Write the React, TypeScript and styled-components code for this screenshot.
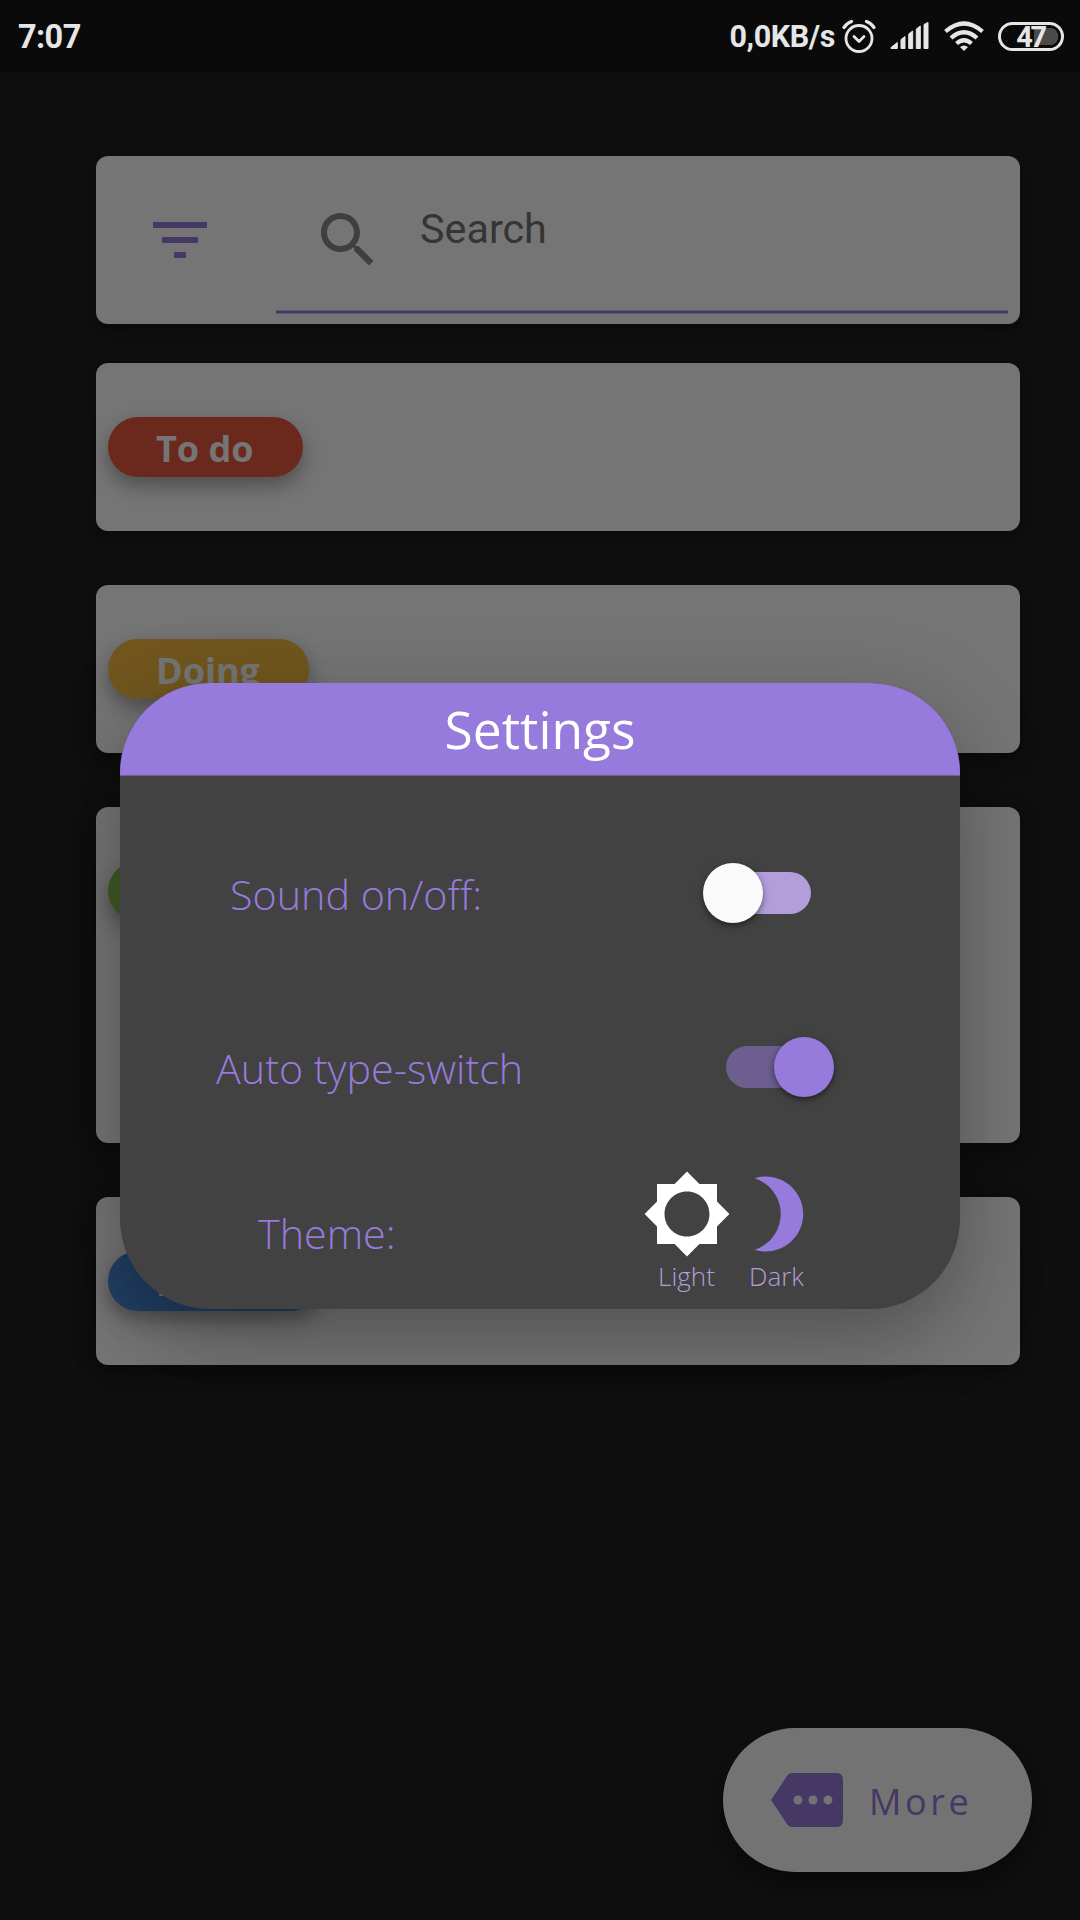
import React, { useState } from "react";
import styled, { createGlobalStyle } from "styled-components";

const GlobalStyle = createGlobalStyle`
  * { box-sizing: border-box; }
  body { margin: 0; background: #212121; font-family: "Open Sans", "Noto Sans", sans-serif; }
`;

const Screen = styled.div`
  position: relative;
  width: 1080px;
  height: 1920px;
  overflow: hidden;
  display: flex;
  flex-direction: column;
  background: #212121;
`;

const StatusBar = styled.header`
  position: relative;
  z-index: 3;
  flex: none;
  height: 72px;
  padding: 0 16px 0 18px;
  display: flex;
  align-items: center;
  background: #0a0a0a;
  color: #e6e6e6;
  font-family: Roboto, sans-serif;
`;

const Clock = styled.span`
  padding-top: 2px;
  font-size: 32.500px;
  font-weight: 700;
  line-height: 40px;
  letter-spacing: -0.6px;
  margin-right: auto;
`;

const NetSpeed = styled.span`
  padding-top: 1px;
  font-size: 30.500px;
  font-weight: 700;
  line-height: 40px;
  letter-spacing: -0.4px;
  margin-right: 7px;
`;

const StatusIcon = styled.svg<{ $gap: number }>`
  display: block;
  flex: none;
  margin-right: ${(p) => p.$gap}px;
`;

const Battery = styled.span`
  width: 66px;
  height: 29px;
  border: 3px solid #e6e6e6;
  border-radius: 15px;
  padding: 4px 4px 2px 3px;
  display: flex;
  align-items: center;
  justify-content: center;
  font-size: 29px;
  font-weight: 700;
  letter-spacing: -2.4px;
  line-height: 24px;
  background: linear-gradient(#4a4a4a, #4a4a4a) right 12px center / 15px 17px no-repeat,
    radial-gradient(circle at 50% 50%, #4a4a4a 8.500px, transparent 9px) right 3px center / 17px 17px no-repeat;
`;

const Board = styled.main`
  padding: 84px 60px 0 96px;
  display: flex;
  flex-direction: column;
  gap: 54px;
`;

const Card = styled.section<{ $height?: number }>`
  height: ${(p) => p.$height ?? 168}px;
  padding: 0 12px;
  border-radius: 12px;
  background: #fff;
  display: flex;
  box-shadow: 0 6px 12px rgba(0, 0, 0, 0.2), 0 6px 24px rgba(0, 0, 0, 0.16);
`;

const SearchCard = styled(Card)`
  margin-bottom: -15px;
  color: #967adc;
`;

const FilterButton = styled.button`
  width: 168px;
  height: 168px;
  padding: 0 0 0 36px;
  border: 0;
  background: none;
  color: inherit;
`;

const SearchField = styled.label`
  flex: 1;
  height: 158px;
  padding-left: 36px;
  display: flex;
  align-items: center;
  border-bottom: 1px solid rgba(150, 122, 220, 0.5);
  box-shadow: inset 0 -2px #967adc, inset 0 -3px rgba(150, 122, 220, 0.5);
`;

const SearchIcon = styled.svg`
  display: block;
  margin-top: 11px;
  color: #8a8a8a;
`;

const SearchHint = styled.span`
  margin: -11px 0 0 36px;
  font: 400 41.300px/50px Roboto, sans-serif;
  color: #737373;
`;

const Chip = styled.span<{ $color: string }>`
  height: 60px;
  margin-top: 54px;
  padding: 1px 49px 0 48px;
  border-radius: 30px;
  background: ${(p) => p.$color};
  color: #fff;
  font-size: 36px;
  font-weight: 700;
  line-height: 62px;
  white-space: nowrap;
  box-shadow: 0 9px 15px rgba(0, 0, 0, 0.2), 0 9px 30px rgba(0, 0, 0, 0.16);
`;

const MoreButton = styled.button`
  position: absolute;
  right: 48px;
  bottom: 48px;
  width: 309px;
  height: 144px;
  padding: 0 0 0 48px;
  border: 0;
  border-radius: 72px;
  background: #fafafa;
  color: #967adc;
  display: flex;
  align-items: center;
  gap: 25px;
  box-shadow: 0 9px 15px rgba(0, 0, 0, 0.2), 0 15px 36px rgba(0, 0, 0, 0.25);
`;

const MoreLabel = styled.span`
  padding: 3px 0 0 1px;
  font: 400 36px/50px "Open Sans", sans-serif;
  letter-spacing: 3.6px;
`;

const Scrim = styled.div`
  position: absolute;
  inset: 0;
  z-index: 2;
  padding: 683px 120px 0;
  background: rgba(0, 0, 0, 0.54);
`;

const Dialog = styled.div`
  height: 626px;
  border-radius: 90px;
  overflow: hidden;
  background: #424242;
  box-shadow: 0 24px 90px 6px rgba(0, 0, 0, 0.2), 0 36px 60px -12px rgba(0, 0, 0, 0.12);
`;

const DialogTitle = styled.h1`
  height: 93px;
  margin: 0;
  background: #967adc;
  border-bottom: 1px solid #6c5e8f;
  color: #fff;
  font-size: 51.500px;
  font-weight: 400;
  line-height: 93px;
  text-align: center;
`;

const SettingRow = styled.div<{ $before: number; $left: number; $height: number }>`
  height: ${(p) => p.$height}px;
  margin-top: ${(p) => p.$before}px;
  padding-left: ${(p) => p.$left}px;
  display: flex;
  align-items: center;
`;

const SettingLabel = styled.span<{ $width: number; $drop?: number }>`
  width: ${(p) => p.$width}px;
  padding-top: ${(p) => p.$drop ?? 0}px;
  color: #967adc;
  font-size: 41.250px;
  font-weight: 300;
  line-height: 57px;
  white-space: nowrap;
`;

const Track = styled.button<{ $on: boolean }>`
  width: 99px;
  height: 42px;
  padding: 0;
  border: 0;
  border-radius: 21px;
  display: flex;
  align-items: center;
  justify-content: ${(p) => (p.$on ? "flex-end" : "flex-start")};
  background: ${(p) => (p.$on ? "#6c5e8f" : "#b39ddb")};
`;

const Thumb = styled.span<{ $on: boolean }>`
  flex: none;
  width: 60px;
  height: 60px;
  margin: 0 -9px;
  border-radius: 50%;
  background: ${(p) => (p.$on ? "#967adc" : "#fafafa")};
  box-shadow: 0 3px 5px rgba(0, 0, 0, 0.3), 0 2px 10px rgba(0, 0, 0, 0.2);
`;

const ThemeOption = styled.button<{ $color: string }>`
  width: 90px;
  padding: 0;
  border: 0;
  background: none;
  color: ${(p) => p.$color};
  display: flex;
  flex-direction: column;
  align-items: center;
`;

const ThemeName = styled.span`
  margin: -1px 0 1px -1px;
  color: #b39ddb;
  font: 300 26px/36px "Open Sans", sans-serif;
`;

const Glyph = ({ d, size = 72 }: { d: string; size?: number }) => (
  <svg width={size} height={size} viewBox="0 0 24 24" fill="currentColor" style={{ display: "block" }}>
    <path d={d} />
  </svg>
);

const FILTER = "M10 18h4v-2h-4v2zM3 6v2h18V6H3zm3 7h12v-2H6v2z";
const SEARCH =
  "M15.5 14h-.79l-.28-.27C15.41 12.59 16 11.11 16 9.5 16 5.91 13.09 3 9.5 3S3 5.91 3 9.5 5.91 16 9.5 16c1.61 0 3.09-.59 4.23-1.57l.27.28v.79l5 4.99L20.49 19l-4.99-5zm-6 0C7.01 14 5 11.99 5 9.5S7.01 5 9.5 5 14 7.01 14 9.5 11.99 14 9.5 14z";
const MORE =
  "M22 3H7c-.69 0-1.23.35-1.59.88L0 12l5.41 8.11c.36.53.9.89 1.59.89h15c1.1 0 2-.9 2-2V5c0-1.1-.9-2-2-2zM9 13.5c-.83 0-1.5-.67-1.5-1.5s.67-1.5 1.5-1.5 1.5.67 1.5 1.5-.67 1.5-1.5 1.5zm5 0c-.83 0-1.5-.67-1.5-1.5s.67-1.5 1.5-1.5 1.5.67 1.5 1.5-.67 1.5-1.5 1.5zm5 0c-.83 0-1.5-.67-1.5-1.5s.67-1.5 1.5-1.5 1.5.67 1.5 1.5-.67 1.5-1.5 1.5z";
const SUN =
  "M20 15.31L23.31 12 20 8.69V4h-4.69L12 .69 8.69 4H4v4.69L.69 12 4 15.31V20h4.69L12 23.31 15.31 20H20v-4.69zM12 18c-3.31 0-6-2.69-6-6s2.69-6 6-6 6 2.69 6 6-2.69 6-6 6z";
const MOON =
  "M9 2c-1.05 0-2.05.16-3 .46 4.06 1.27 7 5.06 7 9.54 0 4.48-2.94 8.27-7 9.54.95.3 1.95.46 3 .46 5.52 0 10-4.48 10-10S14.52 2 9 2z";

const columns = [
  { name: "To do", color: "#e9573f" },
  { name: "Doing", color: "#f6bb42" },
  { name: "Done", color: "#8cc152", height: 336 },
  { name: "Hobby", color: "#4a89dc" },
];

const AlarmIcon = () => (
  <StatusIcon $gap={14} width="34" height="34" viewBox="0 0 34 34" fill="none" stroke="#e6e6e6" strokeLinecap="round">
    <circle cx="17" cy="19.5" r="13" strokeWidth="2.8" />
    <path d="M12 17.500l5 5 5-5" strokeWidth="2.8" strokeLinejoin="round" />
    <path d="M2 8.500q3-4.500 7.500-6M32 8.500q-3-4.500-7.500-6" strokeWidth="3.2" />
  </StatusIcon>
);

const SignalIcon = () => (
  <StatusIcon $gap={15} width="39" height="28" viewBox="0 0 39 28" fill="#e6e6e6" stroke="#e6e6e6" strokeWidth="1" strokeLinejoin="round">
    <path d="M1 26.500v-1L7.300 20.500v6zM11 26.500V17.500l4-3v12zM18.700 26.500V12l4-3v17.500zM26.300 26.500V7l4-3v22.500zM34 26.500V2.500l4-2v26z" />
  </StatusIcon>
);

const WifiIcon = () => (
  <StatusIcon $gap={14} width="40" height="30" viewBox="0 0 40 30" fill="none" stroke="#e6e6e6" strokeWidth="4.2">
    <path d="M1.500 10.500q18.500-16 37 0M7 17q13-11.500 26 0M12.500 22.500q7.500-6.500 15 0" />
    <path d="M16 26q4-3 8 0l-4 4z" fill="#e6e6e6" stroke="none" />
  </StatusIcon>
);

function Switch({ initial }: { initial: boolean }) {
  const [on, setOn] = useState(initial);
  return (
    <Track $on={on} role="switch" aria-checked={on} onClick={() => setOn(!on)}>
      <Thumb $on={on} />
    </Track>
  );
}

export default function App() {
  return (
    <Screen>
      <GlobalStyle />
      <StatusBar>
        <Clock>7:07</Clock>
        <NetSpeed>0,0KB/s</NetSpeed>
        <AlarmIcon />
        <SignalIcon />
        <WifiIcon />
        <Battery>47</Battery>
      </StatusBar>

      <Board>
        <SearchCard>
          <FilterButton aria-label="Filter">
            <Glyph d={FILTER} />
          </FilterButton>
          <SearchField>
            <SearchIcon width="72" height="72" viewBox="0 0 24 24" fill="currentColor">
              <path d={SEARCH} />
            </SearchIcon>
            <SearchHint>Search</SearchHint>
          </SearchField>
        </SearchCard>
        {columns.map((c) => (
          <Card key={c.name} $height={c.height}>
            <Chip $color={c.color}>{c.name}</Chip>
          </Card>
        ))}
      </Board>

      <MoreButton>
        <Glyph d={MORE} />
        <MoreLabel>More</MoreLabel>
      </MoreButton>

      <Scrim>
        <Dialog role="dialog" aria-label="Settings">
          <DialogTitle>Settings</DialogTitle>
          <SettingRow $before={87} $left={110} $height={60}>
            <SettingLabel $width={482} $drop={2}>Sound on/off:</SettingLabel>
            <Switch initial={false} />
          </SettingRow>
          <SettingRow $before={114} $left={96} $height={60}>
            <SettingLabel $width={510} $drop={2}>Auto type-switch</SettingLabel>
            <Switch initial={true} />
          </SettingRow>
          <SettingRow $before={70} $left={138} $height={130}>
            <SettingLabel $width={384} $drop={2}>Theme:</SettingLabel>
            <ThemeOption $color="#fff">
              <Glyph d={SUN} size={90} />
              <ThemeName>Light</ThemeName>
            </ThemeOption>
            <ThemeOption $color="#967adc">
              <Glyph d={MOON} size={90} />
              <ThemeName>Dark</ThemeName>
            </ThemeOption>
          </SettingRow>
        </Dialog>
      </Scrim>
    </Screen>
  );
}
